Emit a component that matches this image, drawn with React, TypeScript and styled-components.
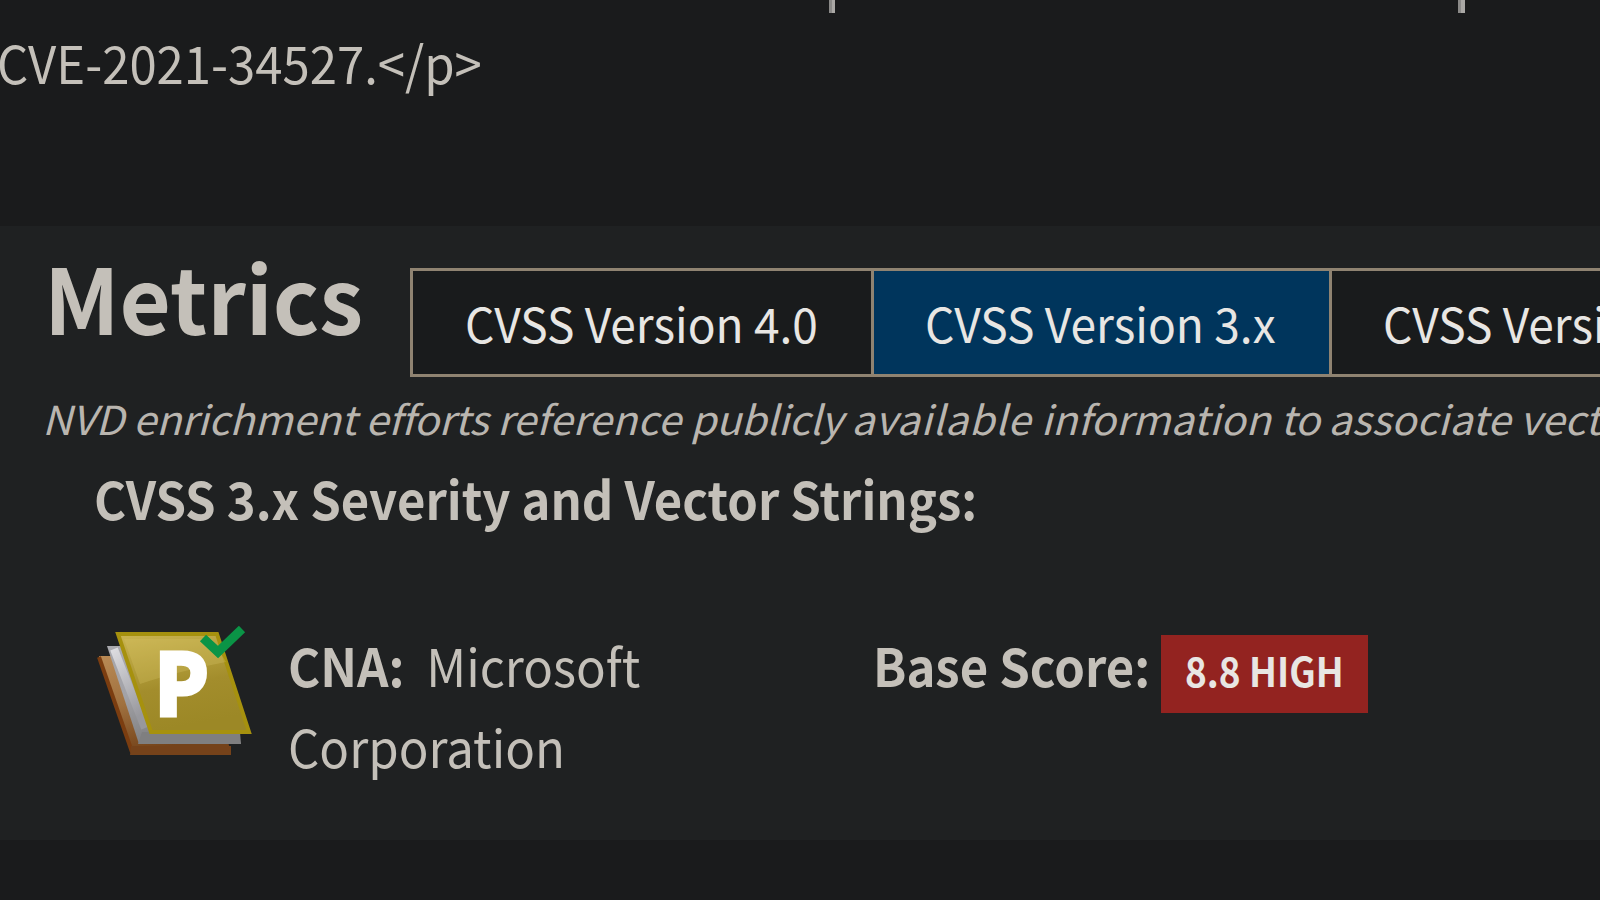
import React from 'react';
import styled, { createGlobalStyle } from 'styled-components';

const GlobalStyle = createGlobalStyle`
  * { box-sizing: border-box; }
  html, body { margin: 0; background: #1a1b1c; }
  body { overflow: hidden; }
`;

const Page = styled.main`
  display: flex;
  flex-direction: column;
  width: 1600px;
  height: 900px;
  overflow: hidden;
  background: #1a1b1c;
  color: #c4c0b9;
  font-family: "Noto Sans CJK SC", "Noto Sans", sans-serif;
  font-size: 52px;
  line-height: 81px;
`;

/* Condensed run of text: keeps the height, narrows the set width. */
const Narrow = styled.span<{ $k: number }>`
  display: inline-block;
  white-space: nowrap;
  transform: scaleX(${(p) => p.$k});
  transform-origin: 0 0;
  font-variant-ligatures: none;
`;

const Description = styled.section`
  height: 226px;
  flex: none;
`;

const Stems = styled.div`
  display: flex;
  height: 21px;
  padding-left: 829px;
  gap: 623px;
`;

const Stem = styled.i<{ $w: number }>`
  width: ${(p) => p.$w}px;
  height: 13px;
  background: linear-gradient(90deg, #8b8a88 3px, #aaa8a5 3px);
`;

const DescriptionLine = styled.p`
  margin: 0 0 0 -3px;
`;

const Panel = styled.section`
  flex: none;
  height: 614px;
  background: #1f2122;
  overflow: hidden;
`;

const Header = styled.header`
  display: flex;
  align-items: flex-start;
  height: 167px;
  padding-left: 44px;
`;

const Title = styled.h2`
  flex: none;
  width: 366px;
  margin: 19px 0 0;
  font-size: 91px;
  line-height: 100px;
  font-weight: 700;
`;

const Tabs = styled.div`
  display: flex;
  flex: 1;
  min-width: 0;
  height: 109px;
  margin-top: 42px;
  border: 3px solid #8f8371;
  border-right: 0;
  overflow: hidden;
`;

const Tab = styled.button<{ $w?: number; $active?: boolean; $pad: number }>`
  flex: ${(p) => (p.$w ? `0 0 ${p.$w}px` : '1 1 0')};
  min-width: 0;
  padding: 0 0 0 ${(p) => p.$pad}px;
  border: 0;
  border-right: ${(p) => (p.$w ? '3px solid #8f8371' : '0')};
  background: ${(p) => (p.$active ? '#00355c' : '#191b1c')};
  color: #e8e6e3;
  font-family: inherit;
  font-size: 48px;
  line-height: 103px;
  text-align: left;
  overflow: hidden;
`;

const Note = styled.p`
  margin: 0 0 0 42px;
  font-size: 40px;
  line-height: 50px;
  font-style: italic;
  color: #b9b5af;
`;

const Word = styled.span<{ $track: number }>`
  letter-spacing: ${(p) => p.$track}px;
`;

const Subtitle = styled.h3`
  margin: 14px 0 0 94px;
  font-size: 52px;
  line-height: 81px;
  font-weight: 700;
`;

const ScoreRow = styled.div`
  display: flex;
  align-items: flex-start;
  margin-top: 86px;
  padding-left: 96px;
`;

const SourceIcon = styled.svg`
  flex: none;
  display: block;
  width: 156px;
  height: 132px;
  margin-top: 2px;
`;

const Source = styled.div`
  flex: none;
  width: 621px;
  padding-left: 36px;
`;

const Vendor = styled.span`
  margin-left: 23px;
`;

const Line = styled.div``;

const ScoreLabel = styled.strong`
  flex: none;
  width: 288px;
`;

const Badge = styled.a`
  flex: none;
  width: 207px;
  height: 78px;
  margin-top: 11px;
  padding: 0 0 7px 24px;
  background: #932320;
  color: #e8e6e3;
  font-size: 40px;
  line-height: 71px;
  font-weight: 700;
`;

const noteWords: [string, number][] = [
  ['NVD enrichment ', -0.2],
  ['efforts ', -0.4],
  ['reference ', 0.2],
  ['publicly ', -0.35],
  ['available ', 0.5],
  ['information ', 0],
  ['to ', -0.5],
  ['associate ', 0.1],
  ['vector strings', 0],
];

const ProviderIcon = () => (
  <SourceIcon viewBox="96 626 156 132">
    <defs>
      <linearGradient id="gold" x1="0" y1="0" x2="0.25" y2="1">
        <stop offset="0" stopColor="#cbb552" />
        <stop offset="0.4" stopColor="#b09b38" />
        <stop offset="0.6" stopColor="#a38d2c" />
        <stop offset="1" stopColor="#9c8826" />
      </linearGradient>
      <linearGradient id="silver" x1="0" y1="0" x2="0.35" y2="1">
        <stop offset="0" stopColor="#a9a9ae" />
        <stop offset="0.5" stopColor="#a2a2a7" />
        <stop offset="1" stopColor="#7d7d7e" />
      </linearGradient>
      <linearGradient id="edge" x1="0" y1="0" x2="0.3" y2="1">
        <stop offset="0" stopColor="#dcdce0" />
        <stop offset="1" stopColor="#98989d" />
      </linearGradient>
      <linearGradient id="bronze" x1="0" y1="0" x2="0.3" y2="1">
        <stop offset="0" stopColor="#b98a55" />
        <stop offset="0.5" stopColor="#a0713f" />
        <stop offset="1" stopColor="#74431a" />
      </linearGradient>
    </defs>
    <path d="M99 656H205L231 753H131Z" fill="url(#bronze)" />
    <path d="M99 657L132 752" stroke="#7b3d10" strokeWidth="4" fill="none" />
    <path d="M131 746H231V755H130Z" fill="#75421a" />
    <path d="M107 646H210L241 744H139Z" fill="url(#silver)" />
    <path d="M114 649L145 728" stroke="url(#edge)" strokeWidth="8" fill="none" />
    <path d="M142 732H240L241 744H138Z" fill="#7f7f80" />
    <path d="M118 634H217L249 732H151Z" fill="url(#gold)" stroke="#a6910e" strokeWidth="4" />
    <path d="M124 639H212L226 662Q175 672 140 684Z" fill="#d7c368" opacity="0.3" />
    <text
      x="0"
      y="0"
      transform="translate(154.5 716) scale(.92 1)"
      fill="#fff"
      stroke="#fff"
      strokeWidth="3"
      fontFamily="'Noto Sans CJK SC', sans-serif"
      fontWeight="900"
      fontSize="86"
    >
      P
    </text>
    <path d="M203 638L218 652L242 629" fill="none" stroke="#0a9446" strokeWidth="9" />
  </SourceIcon>
);

export default function App() {
  return (
    <Page>
      <GlobalStyle />
      <Description>
        <Stems>
          <Stem $w={6} />
          <Stem $w={7} />
        </Stems>
        <DescriptionLine>
          <Narrow $k={0.943}>{'CVE-2021-34527.</p>'}</Narrow>
        </DescriptionLine>
      </Description>
      <Panel>
        <Header>
          <Title>
            <Narrow $k={0.973}>Metrics</Narrow>
          </Title>
          <Tabs>
            <Tab $w={461} $pad={52}>
              <Narrow $k={0.959}>CVSS Version 4.0</Narrow>
            </Tab>
            <Tab $w={458} $pad={51} $active>
              <Narrow $k={0.96}>CVSS Version 3.x</Narrow>
            </Tab>
            <Tab $pad={51}>
              <Narrow $k={0.959}>CVSS Version 2.0</Narrow>
            </Tab>
          </Tabs>
        </Header>
        <Note>
          <Narrow $k={1.04}>
            {noteWords.map(([word, track]) => (
              <Word key={word} $track={track}>
                {word}
              </Word>
            ))}
          </Narrow>
        </Note>
        <Subtitle>
          <Narrow $k={0.942}>CVSS 3.x Severity and Vector Strings:</Narrow>
        </Subtitle>
        <ScoreRow>
          <ProviderIcon />
          <Source>
            <Line>
              <Narrow $k={0.945}>
                <strong>CNA:</strong>
                <Vendor>Microsoft</Vendor>
              </Narrow>
            </Line>
            <Line>
              <Narrow $k={0.945}>Corporation</Narrow>
            </Line>
          </Source>
          <ScoreLabel>
            <Narrow $k={0.943}>Base Score:</Narrow>
          </ScoreLabel>
          <Badge>
            <Narrow $k={0.925}>8.8 HIGH</Narrow>
          </Badge>
        </ScoreRow>
      </Panel>
    </Page>
  );
}
